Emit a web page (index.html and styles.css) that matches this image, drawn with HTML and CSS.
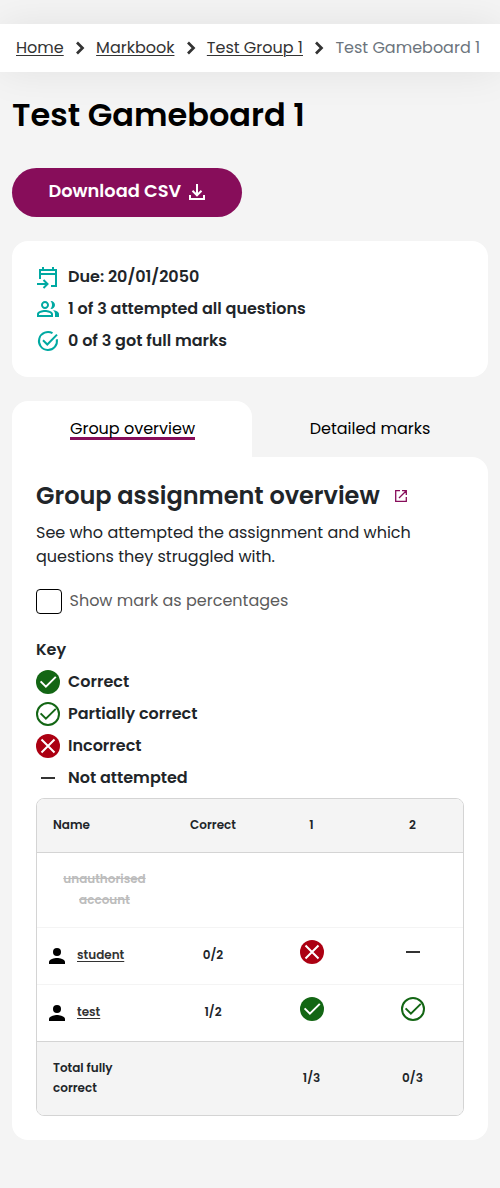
FILE: index.html
```html
<!DOCTYPE html>
<html lang="en">
<head>
<meta charset="utf-8">
<title>Test Gameboard 1</title>
<link rel="stylesheet" href="styles.css">
</head>
<body>
<svg class="defs" width="0" height="0" aria-hidden="true">
  <symbol id="chevron" viewBox="0 0 10 14"><path d="M2 1.5 7.5 7 2 12.5" fill="none" stroke="#333" stroke-width="2.7"/></symbol>
  <symbol id="correct" viewBox="0 0 24 24"><circle cx="12" cy="12" r="12" fill="#136614"/><path d="M4.6 11.4 9.9 16.7 19.8 6.9" fill="none" stroke="#fff" stroke-width="2"/></symbol>
  <symbol id="partial" viewBox="0 0 24 24"><circle cx="12" cy="12" r="11" fill="none" stroke="#136614" stroke-width="2"/><path d="M4.6 11.4 9.9 16.7 19.8 6.9" fill="none" stroke="#136614" stroke-width="2"/></symbol>
  <symbol id="incorrect" viewBox="0 0 24 24"><circle cx="12" cy="12" r="12" fill="#ac0012"/><path d="M5.5 5.5 18.5 18.5M18.5 5.5 5.5 18.5" fill="none" stroke="#fff" stroke-width="2"/></symbol>
  <symbol id="none" viewBox="0 0 24 24"><path d="M5 12H19" stroke="#333" stroke-width="2"/></symbol>
  <symbol id="person" viewBox="0 0 16 16"><circle cx="8" cy="4" r="4"/><path d="M0 16v-2c0-2.7 5.3-4 8-4s8 1.3 8 4v2z"/></symbol>
</svg>
<nav class="breadcrumb">
  <a href="#">Home</a><svg class="chev"><use href="#chevron"/></svg>
  <a href="#">Markbook</a><svg class="chev"><use href="#chevron"/></svg>
  <a href="#">Test Group 1</a><svg class="chev"><use href="#chevron"/></svg>
  <span class="bc-current">Test Gameboard 1</span>
</nav>
<main class="page">
  <h1 class="title">Test Gameboard 1</h1>
  <button class="download"><span>Download CSV</span>
    <svg width="16" height="16" viewBox="0 0 16 16" fill="none" stroke="#fff" stroke-width="2"><path d="M8 0v11M3.5 6.8 8 11.3l4.5-4.5M1 11v4h14v-4"/></svg>
  </button>
  <section class="summary">
    <div class="line">
      <svg width="24" height="24" viewBox="0 0 24 24" fill="none" stroke="#00a9a2" stroke-width="2"><path d="M4 14V5h16v16h-5M3 9h18M7 2v4M17 2v4M1 19h10M7.5 15l4 4-4 4"/></svg>
      <span>Due: 20/01/2050</span>
    </div>
    <div class="line">
      <svg width="24" height="24" viewBox="0 0 24 24" fill="#00a9a2"><path d="M9 12c2.2 0 4-1.8 4-4s-1.8-4-4-4-4 1.8-4 4 1.8 4 4 4zm0-6c1.1 0 2 .9 2 2s-.9 2-2 2-2-.9-2-2 .9-2 2-2zm0 7c-2.7 0-8 1.3-8 4v3h16v-3c0-2.7-5.3-4-8-4zm6 5H3v-1c0-.7 3.1-2 6-2s6 1.3 6 2v1zM14.5 11.9c.2 0 .3.1.5.1 2.2 0 4-1.8 4-4s-1.800-4-4-4c-.2 0-.3 0-.5.1C15.4 5.2 16 6.5 16 8s-.6 2.800-1.500 3.900zM16.700 13.100C18.200 14 19 15.300 19 17v3h4v-3c0-2.200-3.500-3.500-6.300-3.900z"/></svg>
      <span>1 of 3 attempted all questions</span>
    </div>
    <div class="line">
      <svg width="24" height="24" viewBox="0 0 24 24" fill="none" stroke="#00a9a2" stroke-width="2"><path d="M16.5 4.2a9 9 0 1 0 4.300 6M7 11.300l4.300 4.200L21 5.600"/></svg>
      <span>0 of 3 got full marks</span>
    </div>
  </section>
  <div class="tabs">
    <div class="tab active"><span>Group overview</span></div>
    <div class="tab"><span>Detailed marks</span></div>
  </div>
  <section class="panel">
    <h2 class="heading"><span>Group assignment overview</span>
      <svg width="12" height="12" viewBox="0 0 12 12" fill="none" stroke="#870d5a" stroke-width="1.3"><path d="M5 .7H.7v10.600h10.600V7M7 .7h4.300V5M11.300.7 4 8"/></svg>
    </h2>
    <p class="intro">See who attempted the assignment and which<br>questions they struggled with.</p>
    <label class="check"><input type="checkbox"><span>Show mark as percentages</span></label>
    <div class="key">
      <div class="key-title">Key</div>
      <div class="line"><svg width="24" height="24"><use href="#correct"/></svg><span>Correct</span></div>
      <div class="line"><svg width="24" height="24"><use href="#partial"/></svg><span>Partially correct</span></div>
      <div class="line"><svg width="24" height="24"><use href="#incorrect"/></svg><span>Incorrect</span></div>
      <div class="line"><svg width="24" height="24"><use href="#none"/></svg><span>Not attempted</span></div>
    </div>
    <div class="table-wrap">
      <table class="marks">
        <colgroup><col class="c-name"><col class="c-correct"><col><col></colgroup>
        <thead><tr><th class="left">Name</th><th>Correct</th><th>1</th><th>2</th></tr></thead>
        <tbody>
          <tr class="unauth"><td><s>unauthorised<br>account</s></td><td></td><td></td><td></td></tr>
          <tr class="pupil"><td><div class="user"><svg width="16" height="16"><use href="#person"/></svg><a href="#">student</a></div></td><td>0/2</td><td><svg class="mark"><use href="#incorrect"/></svg></td><td><svg class="mark"><use href="#none"/></svg></td></tr>
          <tr class="pupil"><td><div class="user"><svg width="16" height="16"><use href="#person"/></svg><a href="#">test</a></div></td><td>1/2</td><td><svg class="mark"><use href="#correct"/></svg></td><td><svg class="mark"><use href="#partial"/></svg></td></tr>
        </tbody>
        <tfoot><tr><td class="left">Total fully<br>correct</td><td></td><td>1/3</td><td>0/3</td></tr></tfoot>
      </table>
    </div>
  </section>
</main>
</body>
</html>
```

FILE: styles.css
```css
* { box-sizing: border-box; }
body { margin: 0; padding-top: 24px; min-height: 1188px; background: #f4f4f4; color: #212529; font: 16px/24px Poppins, Inter, sans-serif; overflow-x: hidden; }
.defs { position: absolute; }
svg { display: block; flex: none; }
a { color: #333; text-decoration: underline; text-decoration-thickness: 1px; text-underline-offset: 2px; }
.breadcrumb { display: flex; align-items: center; height: 48px; padding-left: 16px; background: #fff; box-shadow: 0 0 40px rgba(0, 0, 0, .08); white-space: nowrap; }
.chev { width: 10px; height: 14px; margin: 0 11px 0 11.4px; }
.bc-current { color: #6c757d; }
.page { padding: 0 12px; }
.title { margin: 24px 0 0; height: 72px; font-size: 32px; line-height: 38px; font-weight: 600; color: #000; white-space: nowrap; }
.download { display: flex; align-items: center; gap: 8px; width: 230px; height: 49px; padding: 0 0 3px 36.5px; border: 0; border-radius: 25px; background: #870d5a; color: #fff; font: 600 17.8px/26px Poppins, Inter, sans-serif; white-space: nowrap; }
.download span { margin-top: -1px; }
.download svg { margin-top: 2px; }
.summary { margin-top: 24px; height: 136px; padding: 24px; border-radius: 16px; background: #fff; }
.line { display: flex; align-items: center; gap: 8px; height: 24px; margin-bottom: 8px; font-weight: 600; white-space: nowrap; }
.tabs { display: grid; grid-template-columns: 240px 236px; height: 56px; margin-top: 24px; }
.tab { display: flex; justify-content: center; padding-top: 16px; color: #000; border-radius: 16px 16px 0 0; white-space: nowrap; }
.active { padding-left: 1px; background: #fff; }
.active span { height: 23px; border-bottom: 3px solid #870d5a; }
.panel { height: 683px; padding: 24px; border-radius: 0 16px 16px 16px; background: #fff; }
.heading { display: flex; align-items: center; gap: 15px; height: 29px; margin: 0 0 11px; font-size: 24px; line-height: 29px; font-weight: 600; white-space: nowrap; }
.intro { margin: 0; white-space: nowrap; }
.check { display: flex; gap: 7.5px; margin-top: 20px; color: #5c5c5c; white-space: nowrap; }
.check input { appearance: none; flex: none; width: 26px; height: 25px; margin: 0; border: 1px solid #000; border-radius: 4px; background: #fff; }
.key { margin-top: 24px; }
.key-title { height: 24px; margin-bottom: 8px; font-weight: 600; }
.table-wrap { height: 318px; border: 1px solid #d4d4d4; border-radius: 8px; overflow: hidden; }
.marks { width: 426px; table-layout: fixed; border-collapse: separate; border-spacing: 0; font-size: 12px; line-height: 20px; font-weight: 600; text-align: center; }
.c-name { width: 128px; }
.c-correct { width: 96px; }
th, td { padding: 0; font-weight: 600; }
.marks .left { padding-left: 16px; text-align: left; }
thead th { height: 54px; padding-bottom: 1px; background: #f4f4f4; border-bottom: 1px solid #d4d4d4; }
.unauth td { height: 74px; padding-bottom: 3px; line-height: 21px; color: #bcbcbc; }
.unauth td:first-child { padding-left: 7px; }
.pupil td { height: 57px; border-top: 1px solid #f4f4f4; padding-bottom: 2px; }
.user { display: flex; align-items: center; gap: 12px; padding-left: 12px; }
.user svg { margin-top: 1px; }
.mark { width: 24px; height: 24px; margin: -6px auto 0; }
tfoot td { height: 75px; background: #f4f4f4; border-top: 1px solid #d4d4d4; padding-bottom: 3px; }
```
